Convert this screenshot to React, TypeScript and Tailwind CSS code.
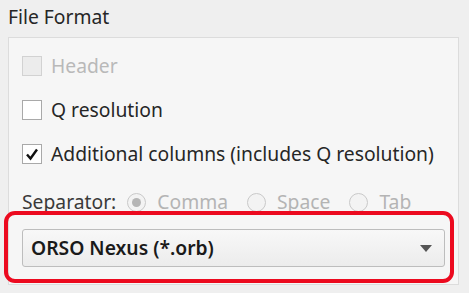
import React from "react";

function Check({ checked, disabled }: { checked?: boolean; disabled?: boolean }) {
  return (
    <span
      className={`flex h-[20px] w-[20px] shrink-0 items-center justify-center border ${
        disabled ? "border-[#d2d2d2] bg-[#ececec]" : "border-[#a9a9a9] bg-white"
      }`}
    >
      {checked && (
        <svg width="16" height="16" viewBox="0 0 16 16">
          <path d="M3 8.5 L6.5 12.5 L13 3.5" fill="none" stroke="#111" strokeWidth="2.4" />
        </svg>
      )}
    </span>
  );
}

function Radio({ checked, label }: { checked?: boolean; label: string }) {
  return (
    <span className="flex items-center gap-[11px]">
      <span className="flex h-[19px] w-[19px] items-center justify-center rounded-full border border-[#c9c9c9] bg-[#f3f3f3]">
        {checked && <span className="h-[9px] w-[9px] rounded-full bg-[#b5b5b5]" />}
      </span>
      <span className="text-[#b4b4b4]">{label}</span>
    </span>
  );
}

export default function App() {
  return (
    <div
      className="h-[293px] w-[469px] overflow-hidden bg-[#efefef] pl-[8px] pr-[10px] pt-[5px] text-[19.3px] text-[#262626]"
      style={{ fontFamily: '"Noto Sans", sans-serif' }}
    >
      <div className="leading-[24px]">File Format</div>
      <div className="relative mt-[8px] h-[248px] border border-[#dcdcdc] bg-[#f6f6f6] px-[13px] pt-[18px]">
        <div className="flex flex-col gap-[24px]">
          <label className="flex h-[20px] items-center gap-[9px] text-[#b9b9b9]">
            <Check disabled />
            <span>Header</span>
          </label>
          <label className="flex h-[20px] items-center gap-[9px]">
            <Check />
            <span>Q resolution</span>
          </label>
          <label className="flex h-[20px] items-center gap-[9px]">
            <Check checked />
            <span>Additional columns (includes Q resolution)</span>
          </label>
          <div className="mt-[3px] flex h-[22px] items-center gap-[11px]">
            <span className="text-[#3a3a3a]">Separator:</span>
            <div className="flex items-center gap-[19px]">
              <Radio checked label="Comma" />
              <Radio label="Space" />
              <Radio label="Tab" />
            </div>
          </div>
        </div>
        <div className="mt-[16px] flex h-[38px] items-center justify-between rounded-[3px] border border-[#bdbdbd] bg-gradient-to-b from-[#f8f8f8] to-[#ececec] pl-[8px] pr-[12px]">
          <span className="font-semibold text-[#1a1a1a]">ORSO Nexus (*.orb)</span>
          <svg width="12" height="7" viewBox="0 0 12 7">
            <path d="M0 0 L12 0 L6 7 Z" fill="#555" />
          </svg>
        </div>
        <div className="pointer-events-none absolute left-[-5px] top-[173px] h-[72px] w-[450px] rounded-[11px] border-[4px] border-[#ec0a1f]" />
      </div>
    </div>
  );
}
